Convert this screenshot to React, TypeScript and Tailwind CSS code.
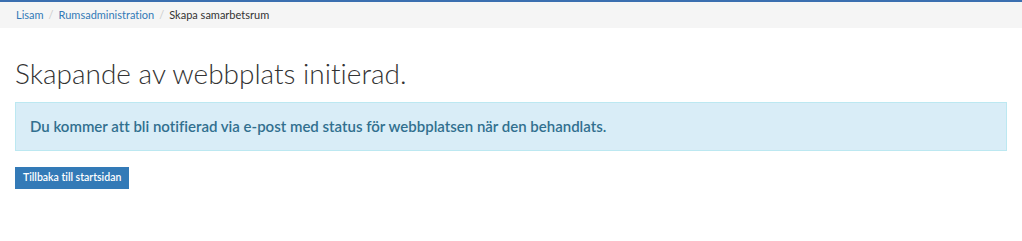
import React from 'react';

const crumbs = ['Lisam', 'Rumsadministration'];

export default function App() {
  return (
    <div className="min-h-[241px] w-full bg-white font-['Lato',sans-serif] [font-variant-ligatures:none]">
      {/* Top rule + breadcrumb */}
      <div className="h-[2px] bg-[#3b6fb0]" />
      <nav className="flex h-[26px] items-center bg-[#f5f5f5] px-4 text-[11px] text-[#333]">
        {crumbs.map((c) => (
          <React.Fragment key={c}>
            <a className="text-[#337ab7]">{c}</a>
            <span className="px-[5px] text-[#ccc]">/</span>
          </React.Fragment>
        ))}
        <span>Skapa samarbetsrum</span>
      </nav>

      <main className="px-[15px]">
        <h1 className="mt-[24px] text-[28px] font-light leading-[42px] text-[#333]">
          Skapande av webbplats initierad.
        </h1>

        <div className="mt-[8px] flex h-[49px] items-center border border-[#bce8f1] bg-[#d9edf7] px-[14px] text-[15px] font-semibold text-[#31708f]">
          Du kommer att bli notifierad via e-post med status för webbplatsen när den behandlats.
        </div>

        <button className="mt-[16px] flex h-[22px] items-center bg-[#337ab7] px-[8px] text-[10.5px] font-semibold text-white">
          Tillbaka till startsidan
        </button>
      </main>
    </div>
  );
}
